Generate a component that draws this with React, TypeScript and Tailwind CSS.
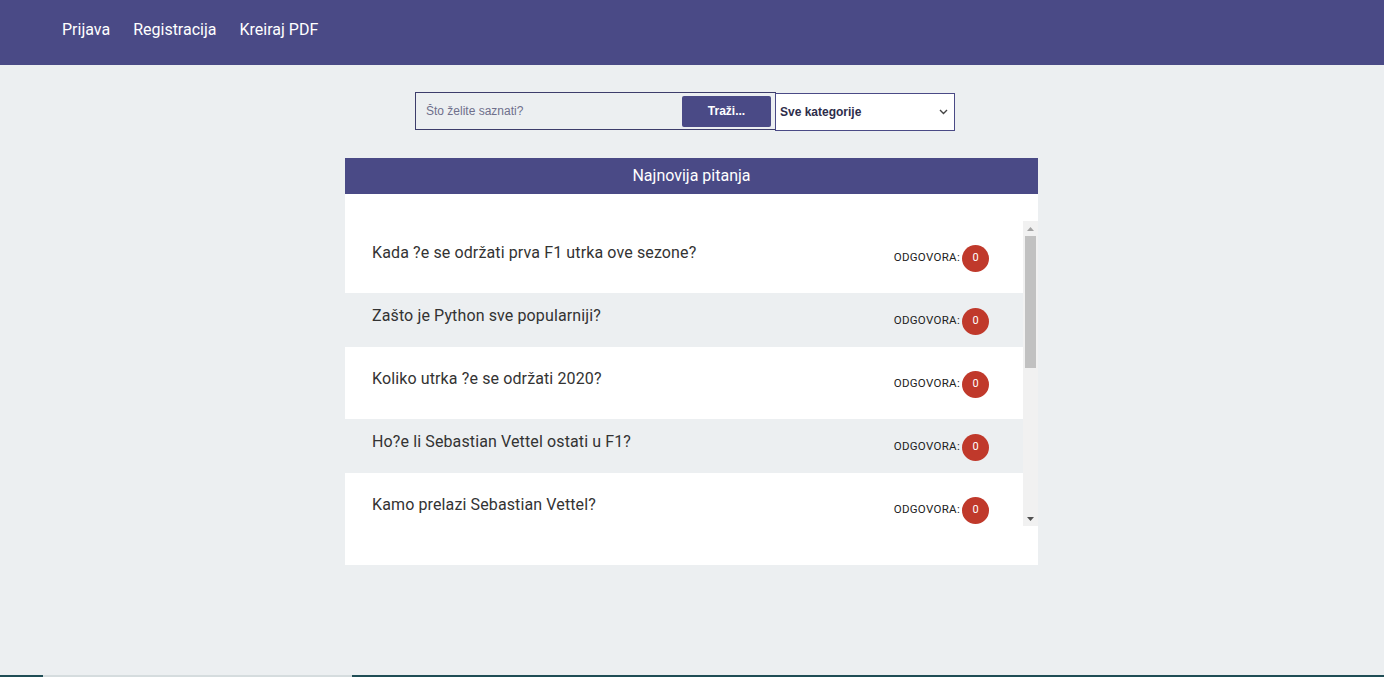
import React from 'react'

const questions = [
  'Kada ?e se održati prva F1 utrka ove sezone?',
  'Zašto je Python sve popularniji?',
  'Koliko utrka ?e se održati 2020?',
  'Ho?e li Sebastian Vettel ostati u F1?',
  'Kamo prelazi Sebastian Vettel?',
]

function QuestionRow({ text, index }: { text: string; index: number }) {
  const odd = index % 2 === 1
  return (
    <div
      className={
        odd
          ? 'flex items-center justify-between bg-[#eceff1] pl-[27px] pr-[34px] h-[54px] shrink-0'
          : 'flex items-center justify-between bg-white pl-[27px] pr-[34px] h-[72px] shrink-0'
      }
    >
      <span className="text-[16px] tracking-[0.12px] text-[#333] pb-[9px]">{text}</span>
      <div className="flex items-center gap-[2px] pt-[2px]">
        <span className="text-[11.5px] text-[#222] tracking-[0.3px]">ODGOVORA:</span>
        <span className="flex h-[27px] w-[27px] items-center justify-center rounded-full bg-[#c0392b] text-[11px] text-white">
          0
        </span>
      </div>
    </div>
  )
}

export default function App() {
  return (
    <div className="min-h-[677px] bg-[#eceff1] font-['Roboto',sans-serif] flex flex-col">
      {/* Navbar */}
      <nav className="h-[65px] bg-[#4a4a86] flex items-center gap-[23px] px-[62px] pb-[5px]">
        <a className="text-white text-[16px]">Prijava</a>
        <a className="text-white text-[16px]">Registracija</a>
        <a className="text-white text-[16px]">Kreiraj PDF</a>
      </nav>

      <div className="w-[694px] pr-px mx-auto flex-1">
        {/* Search */}
        <div className="flex items-start pl-[70px] mt-[27px]">
          <div className="flex items-center w-[361px] h-[38px] border border-[#3d3d6b] bg-[#eceff1] pr-[4px] font-['Liberation_Sans',Arial,sans-serif]">
            <input
              placeholder="Što želite saznati?"
              className="flex-1 min-w-0 bg-transparent px-[10px] text-[12px] text-[#333] placeholder:text-[#6f6f8c] outline-none"
            />
            <button className="w-[89px] h-[31px] rounded-[2px] bg-[#4a4a86] text-white text-[12px] font-bold">
              Traži...
            </button>
          </div>
          <div className="mt-[1px] -ml-[1px] flex items-center justify-between w-[180px] h-[38px] border border-[#4a4a86] bg-white pl-[4px] pr-[6px] font-['Liberation_Sans',Arial,sans-serif]">
            <span className="text-[12px] font-bold text-[#2d2d4a]">Sve kategorije</span>
            <svg width="9" height="6" viewBox="0 0 9 6" fill="none">
              <path d="M1 1l3.5 3.5L8 1" stroke="#444" strokeWidth="1.4" />
            </svg>
          </div>
        </div>

        {/* Card */}
        <div className="mt-[27px] bg-white">
          <div className="h-[36px] bg-[#4a4a86] flex items-center justify-center text-white text-[16px]">
            Najnovija pitanja
          </div>
          <div className="pt-[27px] pb-[39px] flex">
            <div className="flex-1 h-[305px] overflow-hidden flex flex-col">
              {questions.map((q, i) => (
                <QuestionRow key={i} text={q} index={i} />
              ))}
            </div>
            {/* scrollbar */}
            <div className="w-[15px] h-[305px] bg-[#f1f1f1] flex flex-col items-center">
              <div className="h-[15px] flex items-center justify-center">
                <svg width="7" height="4" viewBox="0 0 7 4">
                  <path d="M0 4L3.5 0L7 4z" fill="#a3a3a3" />
                </svg>
              </div>
              <div className="w-[11px] h-[132px] bg-[#c1c1c1]" />
              <div className="flex-1" />
              <div className="h-[15px] flex items-center justify-center">
                <svg width="7" height="4" viewBox="0 0 7 4">
                  <path d="M0 0L3.5 4L7 0z" fill="#505050" />
                </svg>
              </div>
            </div>
          </div>
        </div>
      </div>

      {/* bottom strip */}
      <div className="h-[2px] flex">
        <div className="w-[43px] bg-[#1f4d55]" />
        <div className="w-[309px] bg-[#d5dcde]" />
        <div className="flex-1 bg-[#1f4d55]" />
      </div>
    </div>
  )
}
